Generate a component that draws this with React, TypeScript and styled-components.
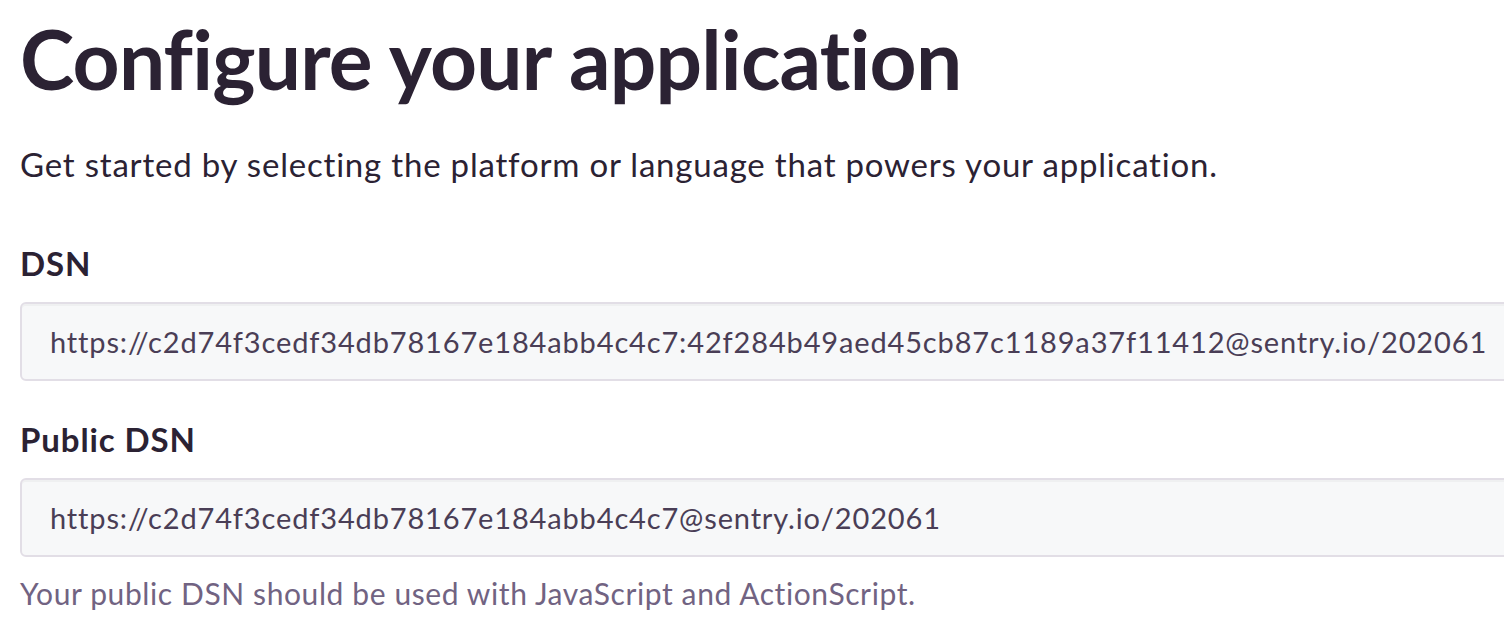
import React from 'react';
import styled, { createGlobalStyle } from 'styled-components';

const GlobalStyle = createGlobalStyle`
  body {
    margin: 0;
    background: #fff;
    font-family: Lato, "Noto Sans", sans-serif;
    overflow: hidden;
  }
`;

const Page = styled.div`
  padding: 10px 0 0 20px;
  width: 1560px;
`;

const Title = styled.h1`
  font-size: 82px;
  font-weight: 700;
  color: #2b2233;
  margin: 0;
  line-height: 96px;
  letter-spacing: -0.8px;
`;

const Lead = styled.p`
  font-size: 33px;
  line-height: 48px;
  letter-spacing: 0.8px;
  color: #2b2233;
  margin: 34px 0 0;
`;

const Field = styled.div<{ $gap: number }>`
  margin-top: ${p => p.$gap}px;
`;

const Label = styled.label`
  display: block;
  font-size: 33px;
  font-weight: 700;
  letter-spacing: 0.9px;
  color: #2b2233;
  line-height: 40px;
  margin-bottom: 19px;
`;

const ValueBox = styled.div`
  box-sizing: border-box;
  height: 79px;
  display: flex;
  align-items: center;
  padding: 0 28px;
  background: #f7f8f9;
  border: 2px solid #e2dee6;
  box-shadow: inset 0 2px 0 rgba(0, 0, 0, 0.03);
  border-radius: 6px;
  font-size: 29px;
  letter-spacing: 0.85px;
  color: #4a3e56;
  white-space: nowrap;
`;

const Help = styled.div`
  margin-top: 16px;
  font-size: 30px;
  line-height: 40px;
  letter-spacing: 0.6px;
  color: #716382;
`;

export default function App() {
  return (
    <>
      <GlobalStyle />
      <Page>
        <Title>Configure your application</Title>
        <Lead>Get started by selecting the platform or language that powers your application.</Lead>
        <Field $gap={55}>
          <Label>DSN</Label>
          <ValueBox>https://c2d74f3cedf34db78167e184abb4c4c7:42f284b49aed45cb87c1189a37f11412@sentry.io/202061</ValueBox>
        </Field>
        <Field $gap={38}>
          <Label>Public DSN</Label>
          <ValueBox>https://c2d74f3cedf34db78167e184abb4c4c7@sentry.io/202061</ValueBox>
          <Help>Your public DSN should be used with JavaScript and ActionScript.</Help>
        </Field>
      </Page>
    </>
  );
}
